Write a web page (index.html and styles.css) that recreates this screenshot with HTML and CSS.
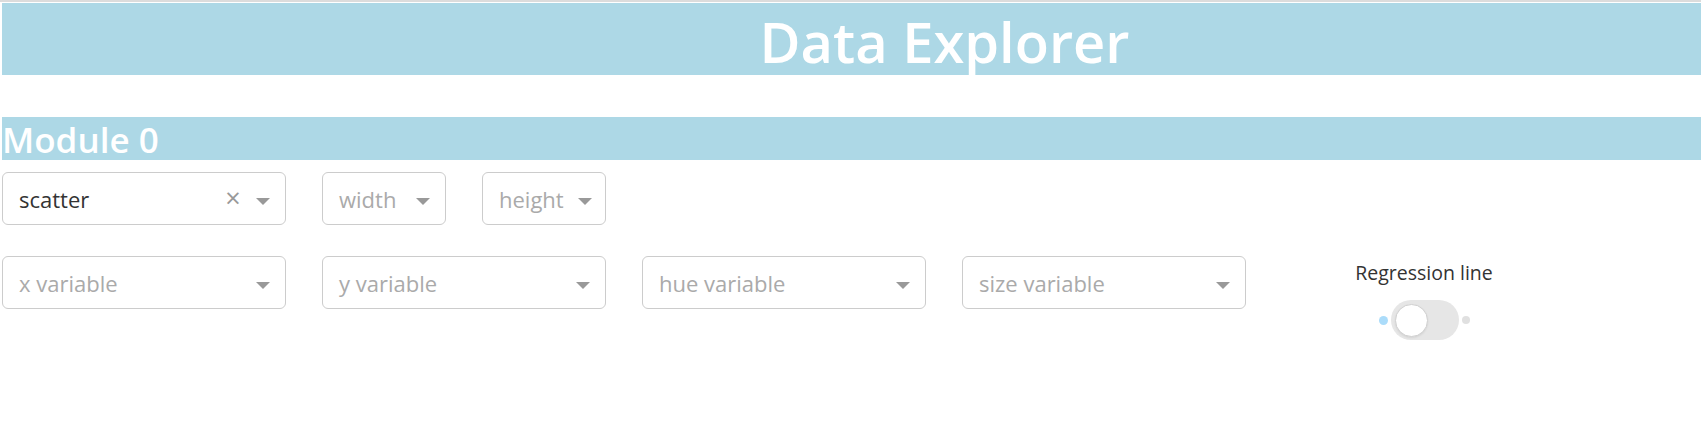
FILE: index.html
```html
<!DOCTYPE html>
<html>
<head>
<meta charset="utf-8">
<link rel="stylesheet" href="styles.css">
</head>
<body>
<div class="topline"></div>
<header class="banner"><h1 class="title">Data Explorer</h1></header>
<section class="module">
  <h2 class="module-title">Module 0</h2>
  <div class="row row-top">
    <div class="select wide">
      <span class="value">scatter</span>
      <span class="clear">×</span>
      <span class="arrow-zone"><span class="arrow"></span></span>
    </div>
    <div class="select narrow">
      <span class="placeholder">width</span>
      <span class="arrow-zone"><span class="arrow"></span></span>
    </div>
    <div class="select narrow">
      <span class="placeholder">height</span>
      <span class="arrow-zone tight"><span class="arrow"></span></span>
    </div>
  </div>
  <div class="row row-bottom">
    <div class="select wide">
      <span class="placeholder">x variable</span>
      <span class="arrow-zone"><span class="arrow"></span></span>
    </div>
    <div class="select wide">
      <span class="placeholder">y variable</span>
      <span class="arrow-zone"><span class="arrow"></span></span>
    </div>
    <div class="select wide">
      <span class="placeholder">hue variable</span>
      <span class="arrow-zone"><span class="arrow"></span></span>
    </div>
    <div class="select wide">
      <span class="placeholder">size variable</span>
      <span class="arrow-zone"><span class="arrow"></span></span>
    </div>
    <div class="switch-col">
      <div class="switch-label">Regression line</div>
      <div class="switch">
        <span class="dot dot-on"></span>
        <span class="track"><span class="knob"></span></span>
        <span class="dot dot-off"></span>
      </div>
    </div>
  </div>
</section>
</body>
</html>
```
FILE: styles.css
```css
html, body {
  margin: 0;
  padding: 0;
  background: #ffffff;
  font-family: "Open Sans", "Noto Sans", sans-serif;
}

.topline {
  height: 2px;
  background: #dcdcdc;
  margin-bottom: 1px;
}

.banner {
  margin-left: 2px;
  height: 72px;
  background: #add8e6;
}

.title {
  margin: 0;
  padding-left: 186px;
  text-align: center;
  color: #ffffff;
  font-size: 56px;
  font-weight: 600;
  line-height: 76px;
  height: 72px;
  white-space: nowrap;
}

.module {
  margin-top: 42px;
  margin-left: 2px;
}

.module-title {
  margin: 0;
  box-sizing: border-box;
  height: 43px;
  padding-top: 1px;
  background: #add8e6;
  color: #ffffff;
  font-size: 35px;
  font-weight: 600;
  line-height: 43px;
  white-space: nowrap;
}

.row {
  display: flex;
  gap: 36px;
  align-items: flex-start;
}

.row-top {
  margin-top: 12px;
}

.row-bottom {
  margin-top: 31px;
}

.select {
  box-sizing: border-box;
  height: 53px;
  border: 1px solid #cccccc;
  border-radius: 6px;
  background: #ffffff;
  display: flex;
  align-items: center;
  padding-left: 16px;
  font-size: 22px;
}

.wide {
  width: 284px;
}

.narrow {
  width: 124px;
}

.value {
  color: #333333;
  flex: 1;
}

.placeholder {
  color: #aaaaaa;
  flex: 1;
  white-space: nowrap;
}

.clear {
  color: #999999;
  font-size: 27px;
  line-height: 1;
  width: 22px;
  text-align: center;
  margin-top: -2px;
  margin-right: 2px;
}

.arrow-zone {
  width: 34px;
  padding-right: 5px;
  display: flex;
  justify-content: center;
  align-items: center;
  height: 100%;
}

.arrow-zone.tight {
  width: 30px;
}

.arrow {
  width: 0;
  height: 0;
  border-style: solid;
  border-width: 7.5px 7.5px 0;
  border-color: #999999 transparent transparent;
  margin-top: 5px;
}

.switch-col {
  width: 284px;
  display: flex;
  flex-direction: column;
  align-items: center;
}

.switch-label {
  margin-top: 3px;
  font-size: 19.5px;
  color: #333333;
  white-space: nowrap;
}

.switch {
  margin-top: 14px;
  display: flex;
  align-items: center;
  gap: 3px;
}

.dot {
  width: 9px;
  height: 9px;
  border-radius: 50%;
}

.dot-on {
  background: #abdcfa;
}

.dot-off {
  background: #e0e0e0;
  width: 8px;
  height: 8px;
}

.track {
  position: relative;
  width: 68px;
  height: 40px;
  border-radius: 20px;
  background: #e6e6e6;
}

.knob {
  position: absolute;
  left: 4px;
  top: 4px;
  box-sizing: border-box;
  width: 33px;
  height: 33px;
  border-radius: 50%;
  background: #ffffff;
  border: 1px solid #d0d0d0;
  box-shadow: 0 1px 2px rgba(0, 0, 0, 0.08);
}
```
